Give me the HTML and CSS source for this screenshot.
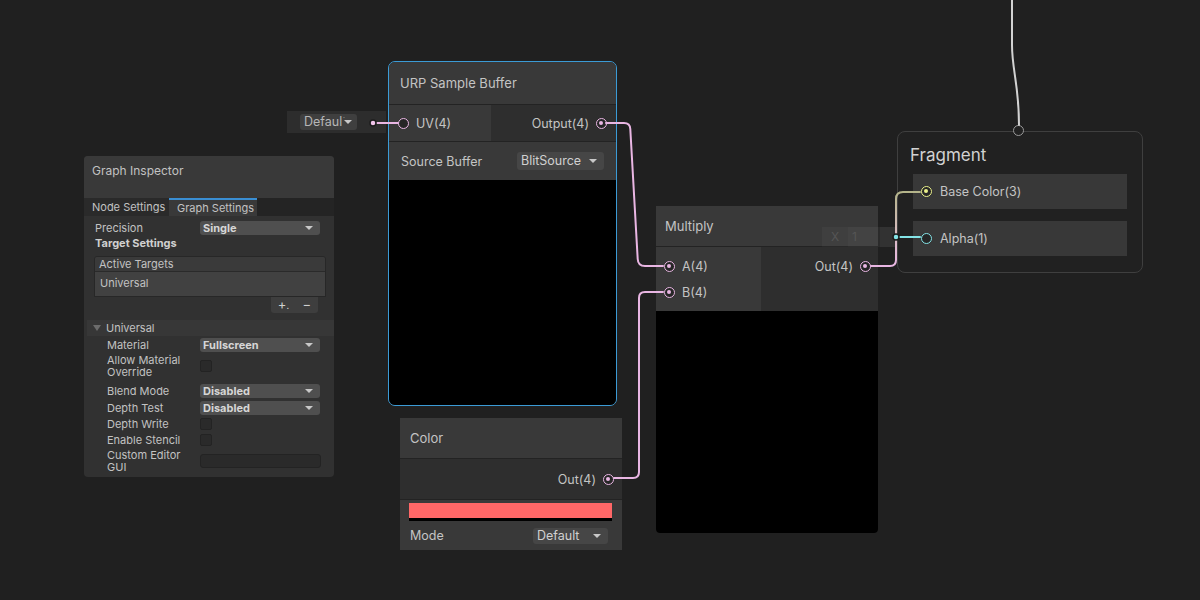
FILE: index.html
```
<!DOCTYPE html>
<html lang="en">
<head>
    <meta charset="UTF-8">
    <title>Shader Graph</title>
    <link rel="stylesheet" href="styles.css">
</head>
<body>
    <div class="graph">

        <!-- inspector panel -->
        <div class="inspector">
            <div class="insp-title">Graph Inspector</div>
            <div class="tabs">
                <div class="tab">Node Settings</div>
                <div class="tab active">Graph Settings</div>
            </div>
            <div class="insp-body">
                <div class="field first">
                    <span class="label">Precision</span>
                    <div class="dropdown">Single</div>
                </div>
                <div class="section-label">Target Settings</div>
                <div class="list">
                    <div class="list-header">Active Targets</div>
                    <div class="list-item">Universal</div>
                </div>
                <div class="list-footer"><span class="plus">+<small>.</small></span><span>&minus;</span></div>
                <div class="foldout"><span class="fold-arrow"></span>Universal</div>
                <div class="fold-body">
                    <div class="field"><span class="label">Material</span><div class="dropdown">Fullscreen</div></div>
                    <div class="field tall"><span class="label">Allow Material Override</span><div class="checkbox"></div></div>
                    <div class="field spaced"><span class="label">Blend Mode</span><div class="dropdown">Disabled</div></div>
                    <div class="field"><span class="label">Depth Test</span><div class="dropdown">Disabled</div></div>
                    <div class="field check"><span class="label">Depth Write</span><div class="checkbox"></div></div>
                    <div class="field check"><span class="label">Enable Stencil</span><div class="checkbox"></div></div>
                    <div class="field tall"><span class="label">Custom Editor GUI</span><div class="text-field"></div></div>
                </div>
            </div>
        </div>

        <!-- inline default for UV -->
        <div class="inline-input uv-default">
            <div class="mini-dropdown"><span>Default</span></div>
        </div>

        <!-- URP Sample Buffer -->
        <div class="node urp-node selected">
            <div class="node-title">URP Sample Buffer</div>
            <div class="ports">
                <div class="inputs urp-inputs">
                    <div class="port-row"><span class="port"></span>UV(4)</div>
                </div>
                <div class="outputs">
                    <div class="port-row">Output(4)<span class="port filled"></span></div>
                </div>
            </div>
            <div class="node-setting">
                <span>Source Buffer</span>
                <div class="node-dropdown">BlitSource</div>
            </div>
            <div class="preview"></div>
        </div>

        <!-- Color -->
        <div class="node color-node">
            <div class="node-title">Color</div>
            <div class="ports single-out">
                <div class="outputs">
                    <div class="port-row">Out(4)<span class="port filled"></span></div>
                </div>
            </div>
            <div class="color-settings">
                <div class="swatch"></div>
                <div class="mode-row">
                    <span>Mode</span>
                    <div class="node-dropdown small">Default</div>
                </div>
            </div>
        </div>

        <!-- Multiply -->
        <div class="node multiply-node">
            <div class="node-title">Multiply</div>
            <div class="ports">
                <div class="inputs mul-inputs">
                    <div class="port-row"><span class="port filled"></span>A(4)</div>
                    <div class="port-row"><span class="port filled"></span>B(4)</div>
                </div>
                <div class="outputs top">
                    <div class="port-row">Out(4)<span class="port filled"></span></div>
                </div>
            </div>
            <div class="preview"></div>
        </div>

        <!-- inline default for Alpha -->
        <div class="inline-input alpha-default">
            <span class="axis">X</span>
            <span class="axis-value">1</span>
            <span class="axis-port"></span>
        </div>

        <!-- Fragment context -->
        <div class="context fragment">
            <div class="context-title">Fragment</div>
            <div class="block"><span class="port filled yellow"></span>Base Color(3)</div>
            <div class="block"><span class="port cyan"></span>Alpha(1)</div>
        </div>
        <span class="port grey vertex-port"></span>

        <svg class="wires" width="1200" height="600" viewBox="0 0 1200 600">
            <defs>
                <linearGradient id="baseWire" gradientUnits="userSpaceOnUse" x1="896" y1="266" x2="896" y2="192">
                    <stop offset="0" stop-color="#e9b6e3"/>
                    <stop offset="0.45" stop-color="#d8bcc0"/>
                    <stop offset="1" stop-color="#b4b48a"/>
                </linearGradient>
            </defs>
            <path class="wire" d="M1012,0 L1012,45 C1012,70 1019,85 1019,125" stroke="#d2d2d2" stroke-width="2.5"/>
            <path class="wire" d="M377,123 H398" stroke="#e9b6e3"/>
            <path class="wire" d="M606,123 H624 Q630,123 630.3,129 L637.7,259 Q638,266 645,266 H663" stroke="#e9b6e3"/>
            <path class="wire" d="M614,478 H633 Q639,478 639,472 V298 Q639,292 645,292 H663" stroke="#e9b6e3"/>
            <path class="wire" d="M871,266 H890 Q896,266 896,260 V199 Q896,192 903,192 H920" stroke="url(#baseWire)"/>
            <path class="wire" d="M896,237 H920" stroke="#84e4e7"/>
            <circle cx="373" cy="123" r="3" fill="#f0c4ea" stroke="#1c1c1c" stroke-width="1.5"/>
            <circle cx="896" cy="237" r="3" fill="#84e4e7" stroke="#1c1c1c" stroke-width="1.5"/>
        </svg>
    </div>
</body>
</html>
```

FILE: styles.css
```
:root {
    --canvas: #202020;
    --node-light: #393939;
    --node-dark: #2e2e2e;
    --divider: #232323;
    --text: #c4c4c4;
    --vec4: #e9b6e3;
    --vec3: #eaf08a;
    --float: #84e4e7;
    --select: #3b9bd6;
}

* {
    margin: 0;
    padding: 0;
    box-sizing: border-box;
}

body {
    background-color: var(--canvas);
    font-family: Inter, 'Noto Sans', sans-serif;
    color: var(--text);
}

.graph {
    position: relative;
    width: 1200px;
    height: 600px;
    overflow: hidden;
    background-color: var(--canvas);
}

/* ---------- inspector ---------- */

.inspector {
    position: absolute;
    left: 84px;
    top: 156px;
    width: 250px;
    height: 321px;
    background-color: #313131;
    border-radius: 4px;
    overflow: hidden;
    font-size: 11px;
    color: #c2c2c2;
}

.insp-title {
    height: 42px;
    padding: 8px 8px 0;
    line-height: 14px;
    font-size: 12px;
    background-color: #393939;
}

.tabs {
    display: flex;
    height: 18px;
    background-color: #242424;
}

.tab {
    width: 85px;
    padding-left: 8px;
    line-height: 18px;
    background-color: #2a2a2a;
}

.tab.active {
    width: 88px;
    background-color: #393939;
    border-top: 2px solid #3a8fd4;
    line-height: 16px;
}

.insp-body {
    display: flex;
    flex-direction: column;
    padding: 0 8px 0 11px;
}

.field {
    display: flex;
    align-items: center;
    height: 15px;
    margin-top: 2px;
}

.field.first {
    margin-top: 4px;
}

.field.tall {
    height: 24px;
}

.field.check {
    height: 14px;
}

.field.spaced {
    margin-top: 5px;
}

.label {
    width: 105px;
    flex-shrink: 0;
    line-height: 12px;
}

.fold-body .label {
    width: 93px;
    padding-right: 5px;
}

.dropdown {
    position: relative;
    width: 120px;
    height: 14px;
    padding-left: 3px;
    line-height: 14px;
    font-weight: 700;
    color: #d6d6d6;
    background-color: #4f4f4f;
    border-radius: 3px;
}

.dropdown::after,
.node-dropdown::after,
.mini-dropdown::after {
    content: '';
    position: absolute;
    right: 7px;
    top: 50%;
    margin-top: -2px;
    border-left: 4px solid transparent;
    border-right: 4px solid transparent;
    border-top: 4px solid #c8c8c8;
}

.checkbox {
    width: 12px;
    height: 12px;
    background-color: #2a2a2a;
    border: 1px solid #232323;
    border-radius: 2px;
}

.text-field {
    width: 121px;
    height: 14px;
    background-color: #2a2a2a;
    border: 1px solid #232323;
    border-radius: 3px;
}

.section-label {
    height: 14px;
    margin-top: 1px;
    line-height: 14px;
    font-weight: 700;
    color: #d0d0d0;
}

.list {
    margin: 6px 0 0 -1px;
    border: 1px solid #272727;
    border-radius: 3px 3px 0 0;
    overflow: hidden;
}

.list-header {
    height: 15px;
    padding-left: 4px;
    line-height: 15px;
    background-color: #3a3a3a;
    border-bottom: 1px solid #2a2a2a;
}

.list-item {
    height: 24px;
    padding-left: 5px;
    line-height: 23px;
    background-color: #414141;
}

.list-footer {
    display: flex;
    align-self: flex-end;
    justify-content: space-around;
    width: 47px;
    height: 16px;
    margin-right: 8px;
    line-height: 15px;
    font-size: 13px;
    background-color: #3e3e3e;
    border-radius: 0 0 3px 3px;
    color: #cfcfcf;
}

.plus small {
    font-size: 9px;
}

.foldout {
    display: flex;
    align-items: center;
    height: 16px;
    margin: 7px -8px 0 -8px;
    padding-left: 6px;
    background-color: #373737;
}

.fold-arrow {
    width: 0;
    height: 0;
    margin-right: 5px;
    border-left: 4px solid transparent;
    border-right: 4px solid transparent;
    border-top: 6px solid #6c6c6c;
}

.fold-body {
    display: flex;
    flex-direction: column;
    padding-left: 12px;
}

.fold-body .field:first-child {
    margin-top: 1px;
}

/* ---------- nodes ---------- */

.node {
    position: absolute;
    display: flex;
    flex-direction: column;
    background-color: var(--node-dark);
    border-radius: 5px;
    overflow: hidden;
    font-size: 12.5px;
}

.node.selected {
    border: 1px solid var(--select);
    border-radius: 7px;
}

.node-title {
    flex-shrink: 0;
    display: flex;
    align-items: center;
    height: 41px;
    padding-left: 10px;
    font-size: 13px;
    background-color: var(--node-light);
    border-bottom: 1px solid var(--divider);
}

.urp-node {
    left: 388px;
    top: 61px;
    width: 229px;
    height: 345px;
}

.urp-node .node-title {
    height: 43px;
    padding-left: 11px;
}

.ports {
    flex-shrink: 0;
    display: flex;
}

.urp-node .ports {
    height: 36px;
}

.inputs {
    display: flex;
    flex-direction: column;
    justify-content: center;
    background-color: var(--node-light);
}

.urp-inputs {
    width: 102px;
    padding-left: 9px;
}

.outputs {
    flex: 1;
    display: flex;
    flex-direction: column;
    justify-content: center;
    align-items: flex-end;
    padding-right: 9px;
    background-color: var(--node-dark);
}

.port-row {
    display: flex;
    align-items: center;
    gap: 7px;
    height: 26px;
}

.port {
    position: relative;
    flex-shrink: 0;
    width: 11px;
    height: 11px;
    border: 1.5px solid var(--vec4);
    border-radius: 50%;
    background-color: #262626;
}

.port.filled::after {
    content: '';
    position: absolute;
    left: 2px;
    top: 2px;
    width: 4px;
    height: 4px;
    border-radius: 50%;
    background-color: var(--vec4);
}

.port.yellow {
    border-color: var(--vec3);
}

.port.yellow::after {
    background-color: var(--vec3);
}

.port.cyan {
    border-color: var(--float);
}

.port.grey {
    border-color: #9a9a9a;
}

.node-setting {
    flex-shrink: 0;
    display: flex;
    align-items: center;
    justify-content: space-between;
    height: 39px;
    padding: 0 12px 0 12px;
    font-size: 12.5px;
    background-color: var(--node-light);
    border-top: 1px solid var(--divider);
}

.node-dropdown {
    position: relative;
    width: 87px;
    height: 18px;
    padding-left: 4px;
    line-height: 18px;
    background-color: #464646;
    border-radius: 3px;
    color: #d0d0d0;
}

.node-dropdown.small {
    width: 75px;
    height: 16px;
    margin-right: 4px;
    line-height: 16px;
}

.preview {
    flex: 1;
    background-color: #000;
}

.color-node {
    left: 400px;
    top: 418px;
    width: 222px;
    height: 132px;
    border-radius: 0;
}

.single-out {
    height: 40px;
}

.color-node .outputs {
    padding-right: 8px;
}

.color-settings {
    flex: 1;
    padding: 3px 10px 0 9px;
    background-color: var(--node-light);
    border-top: 1px solid var(--divider);
}

.swatch {
    height: 18px;
    background-color: #ff6767;
    border-bottom: 3px solid #000;
}

.mode-row {
    display: flex;
    align-items: center;
    justify-content: space-between;
    height: 23px;
    margin-top: 3px;
    padding-left: 1px;
    font-size: 12.5px;
}

.multiply-node {
    left: 656px;
    top: 206px;
    width: 222px;
    height: 327px;
    border-radius: 0 0 4px 4px;
}

.multiply-node .node-title {
    height: 41px;
    padding-left: 9px;
}

.multiply-node .ports {
    height: 64px;
}

.mul-inputs {
    width: 105px;
    padding: 6px 0 0 8px;
    justify-content: flex-start;
}

.outputs.top {
    justify-content: flex-start;
    padding: 6px 7px 0 0;
}

/* ---------- inline port defaults ---------- */

.inline-input {
    position: absolute;
    display: flex;
    align-items: center;
}

.uv-default {
    left: 287px;
    top: 111px;
    width: 99px;
    height: 22px;
    padding-left: 13px;
    background-color: #2d2d2d;
}

.mini-dropdown {
    position: relative;
    width: 57px;
    height: 16px;
    padding-left: 4px;
    overflow: hidden;
    white-space: nowrap;
    line-height: 16px;
    font-size: 12.5px;
    color: #b6b6b6;
    background-color: #3f3f3f;
    border-radius: 3px;
}

.mini-dropdown::after {
    right: 5px;
    box-shadow: 0 0 0 2px #3f3f3f;
    background-color: #3f3f3f;
}

.alpha-default {
    left: 822px;
    top: 227px;
    width: 86px;
    height: 20px;
    font-size: 12px;
    color: #555555;
}

.axis {
    width: 26px;
    height: 100%;
    line-height: 20px;
    text-align: center;
    background-color: rgba(255, 255, 255, 0.03);
}

.axis-value {
    width: 32px;
    height: 100%;
    padding-left: 4px;
    line-height: 20px;
    background-color: rgba(255, 255, 255, 0.05);
}

.axis-port {
    flex: 1;
    height: 100%;
    background-color: #323232;
}

/* ---------- fragment context ---------- */

.context {
    position: absolute;
    display: flex;
    flex-direction: column;
    gap: 12px;
    border: 1px solid #3f3f3f;
    border-radius: 8px;
    background-color: #212121;
}

.fragment {
    left: 897px;
    top: 131px;
    width: 246px;
    height: 142px;
    padding: 0 15px;
}

.context-title {
    height: 30px;
    margin-left: -3px;
    padding-top: 13px;
    font-size: 17px;
    line-height: 20px;
    color: #d2d2d2;
}

.block {
    display: flex;
    align-items: center;
    gap: 8px;
    height: 35px;
    padding-left: 8px;
    font-size: 12.5px;
    background-color: #383838;
}

.vertex-port {
    position: absolute;
    left: 1013px;
    top: 125px;
    background-color: #212121;
}

/* ---------- wires ---------- */

.wires {
    position: absolute;
    left: 0;
    top: 0;
    pointer-events: none;
}

.wire {
    fill: none;
    stroke-width: 2;
    stroke-linecap: round;
}
```
